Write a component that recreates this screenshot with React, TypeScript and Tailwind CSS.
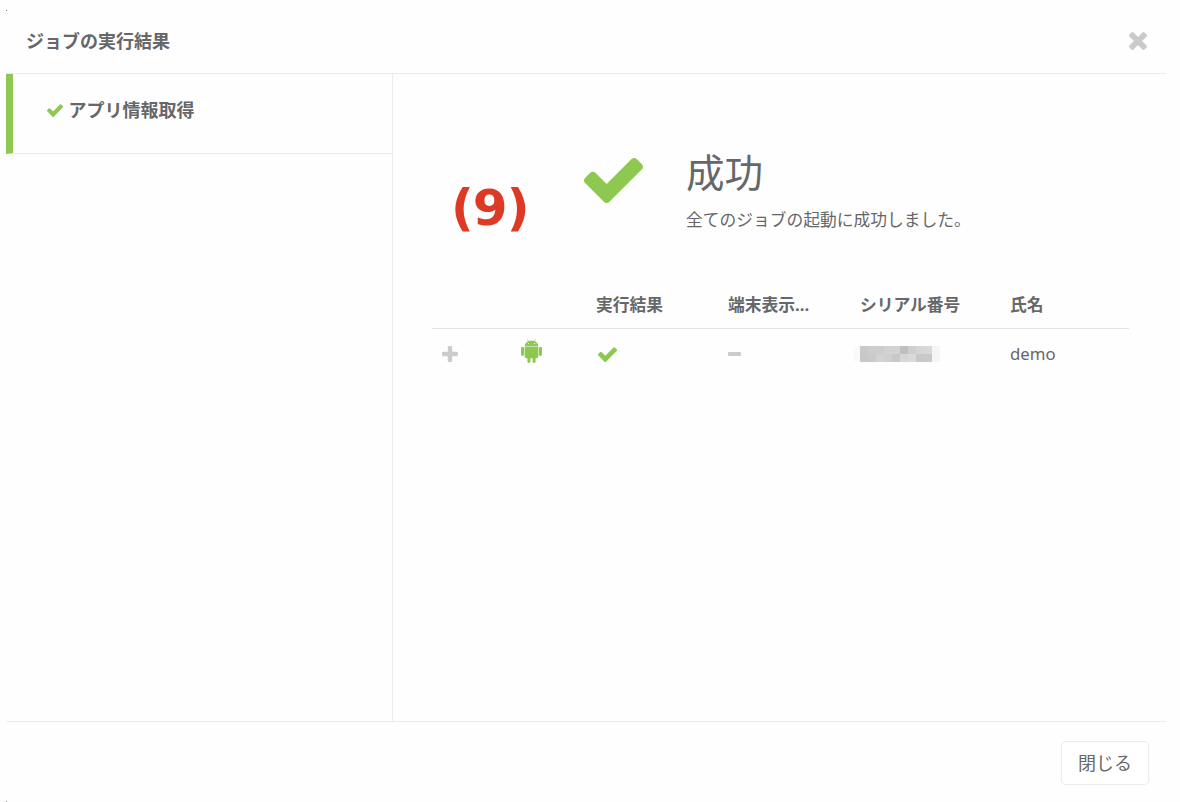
const CHECK =
  "M1671 566q0 40-28 68l-724 724-136 136q-28 28-68 28t-68-28l-136-136-362-362q-28-28-28-68t28-68l136-136q28-28 68-28t68 28l294 295 656-657q28-28 68-28t68 28l136 136q28 28 28 68z";
const TIMES =
  "M1490 1322q0 40-28 68l-136 136q-28 28-68 28t-68-28l-294-294-294 294q-28 28-68 28t-68-28l-136-136q-28-28-28-68t28-68l294-294-294-294q-28-28-28-68t28-68l136-136q28-28 68-28t68 28l294 294 294-294q28-28 68-28t68 28l136 136q28 28 28 68t-28 68l-294 294 294 294q28 28 28 68z";
const PLUS =
  "M1600 736v192q0 40-28 68t-68 28h-416v416q0 40-28 68t-68 28h-192q-40 0-68-28t-28-68v-416h-416q-40 0-68-28t-28-68v-192q0-40 28-68t68-28h416v-416q0-40 28-68t68-28h192q40 0 68 28t28 68v416h416q40 0 68 28t28 68z";
const MINUS =
  "M1600 736v192q0 40-28 68t-68 28h-1216q-40 0-68-28t-28-68v-192q0-40 28-68t68-28h1216q40 0 68 28t28 68z";
const ANDROID =
  "M685 483q16 0 27.5-11.5t11.5-27.5-11.5-27.5-27.5-11.5-27 11.5-11 27.5 11 27.5 27 11.5zm422 0q16 0 27-11.5t11-27.5-11-27.5-27-11.5-27.5 11.5-11.5 27.5 11.5 27.5 27.5 11.5zm-812 184q42 0 72 30t30 72v430q0 43-29.5 73t-72.5 30-73-30-30-73v-430q0-42 30-72t73-30zm1060 19v666q0 46-32 78t-77 32h-75v227q0 43-30 73t-73 30-73-30-30-73v-227h-138v227q0 43-30 73t-73 30q-42 0-72-30t-30-73l-1-227h-74q-46 0-78-32t-32-78v-666h918zm-232-405q107 55 171 153.5t64 215.5h-925q0-117 64-215.5t172-153.5l-71-131q-7-13 5-20 13-6 20 6l72 132q95-42 201-42t201 42l72-132q7-12 20-6 12 7 5 20zm477 488v430q0 43-30 73t-73 30q-42 0-72-30t-30-73v-430q0-43 30-72.5t72-29.5q43 0 73 29.5t30 72.5z";

function Icon({ d, box, className }: { d: string; box: string; className: string }) {
  return (
    <svg viewBox={box} preserveAspectRatio="none" fill="currentColor" className={`shrink-0 ${className}`}>
      <path d={d} />
    </svg>
  );
}

function Check({ className }: { className: string }) {
  return <Icon d={CHECK} box="121 309 1550 1213" className={`text-[#8dc850] ${className}`} />;
}

// pixelated serial number, two rows of 8px cells
const MOSAIC = [
  ["#fafafa", "#c9c9ca", "#cdcdce", "#cdcdce", "#d2d2d3", "#d3d3d4", "#bfbfc2", "#cfcfd0", "#d6d6d7", "#d8d8d9", "#f5f5f5"],
  ["#fafafa", "#c8c8c9", "#cacacb", "#d3d3d4", "#cfcfd0", "#c8c8c9", "#d6d6d7", "#dadadb", "#c8c8c9", "#cacacb", "#f5f5f5"],
];

function Mosaic() {
  return (
    <div className="-ml-1.5 flex flex-col">
      {MOSAIC.map((row, i) => (
        <div key={i} className="flex">
          {row.map((color, j) => (
            <span key={j} className="h-2 w-2 first:w-1.5" style={{ backgroundColor: color }} />
          ))}
        </div>
      ))}
    </div>
  );
}

const COLUMNS = "grid grid-cols-[89px_75px_132px_132px_150px_1fr]";

export default function App() {
  return (
    <div className="relative h-[802px] w-[1180px] overflow-hidden bg-[#fefefe] pl-1.5 pr-3.5 font-['Noto_Sans','Noto_Sans_CJK_JP',sans-serif] text-[#666769]">
      <span className="absolute left-1.5 top-2.5 h-px w-px bg-[#777]" />
      <span className="absolute bottom-0 left-1.5 h-px w-px bg-[#999]" />

      <div className="flex h-full flex-col">
        <header className="flex h-[74px] shrink-0 items-center justify-between border-b border-[#ececec] pl-5 pr-[19px] pt-2">
          <h1 className="text-lg font-bold leading-6">ジョブの実行結果</h1>
          <button type="button" aria-label="閉じる">
            <Icon d={TIMES} box="302 366 1188 1188" className="h-[18px] w-[18px] text-[#cacaca]" />
          </button>
        </header>

        <div className="flex h-[647px] shrink-0">
          <aside className="w-[387px] border-r border-[#ececec]">
            <div className="flex h-20 items-start gap-1.5 border-b border-l-[7px] border-b-[#ececec] border-l-[#8dc850] pl-[33.5px] pt-6">
              <Check className="mt-1.5 h-[13px] w-4" />
              <span className="text-lg font-bold leading-6">アプリ情報取得</span>
            </div>
          </aside>

          <main className="flex-1 pl-[39px] pr-[37px]">
            <section className="flex h-[202px] items-start">
              <span className="ml-[19px] mt-[106px] w-[133px] font-['DejaVu_Sans'] text-[50px] font-bold leading-[56px] tracking-[-1px] text-[#dd3a26]">
                (9)
              </span>
              <Check className="mt-[83px] h-[46px] w-[59px]" />
              <div className="ml-[43px] pt-[73px]">
                <h2 className="text-[38.5px] leading-[50px]">成功</h2>
                <p className="mt-[11px] text-[16.75px] leading-6">全てのジョブの起動に成功しました。</p>
              </div>
            </section>

            <div className={`${COLUMNS} h-[53px] border-b border-[#e3e3e3] pt-[17px] text-[16.75px] font-bold leading-6`}>
              <span />
              <span />
              <span>実行結果</span>
              <span>端末表示...</span>
              <span>シリアル番号</span>
              <span>氏名</span>
            </div>
            <div className={`${COLUMNS} h-[50px] items-center text-[16.8px]`}>
              <Icon d={PLUS} box="192 128 1408 1408" className="ml-2.5 h-4 w-4 text-[#cccccd]" />
              <Icon d={ANDROID} box="192 128 1408 1664" className="-ml-[0.5px] -mt-1.5 h-6 w-[21px] text-[#8dc850]" />
              <Check className="ml-0.5 h-[15px] w-[19px]" />
              <Icon d={MINUS} box="192 640 1408 384" className="-mt-px h-1 w-[13px] text-[#cccccd]" />
              <Mosaic />
              <span>demo</span>
            </div>
          </main>
        </div>

        <footer className="flex flex-1 items-start justify-end border-t border-[#ececec] pr-[17px] pt-[19px]">
          <button type="button" className="h-11 w-[88px] rounded-[5px] border border-[#ececec] bg-white text-lg">
            閉じる
          </button>
        </footer>
      </div>
    </div>
  );
}
